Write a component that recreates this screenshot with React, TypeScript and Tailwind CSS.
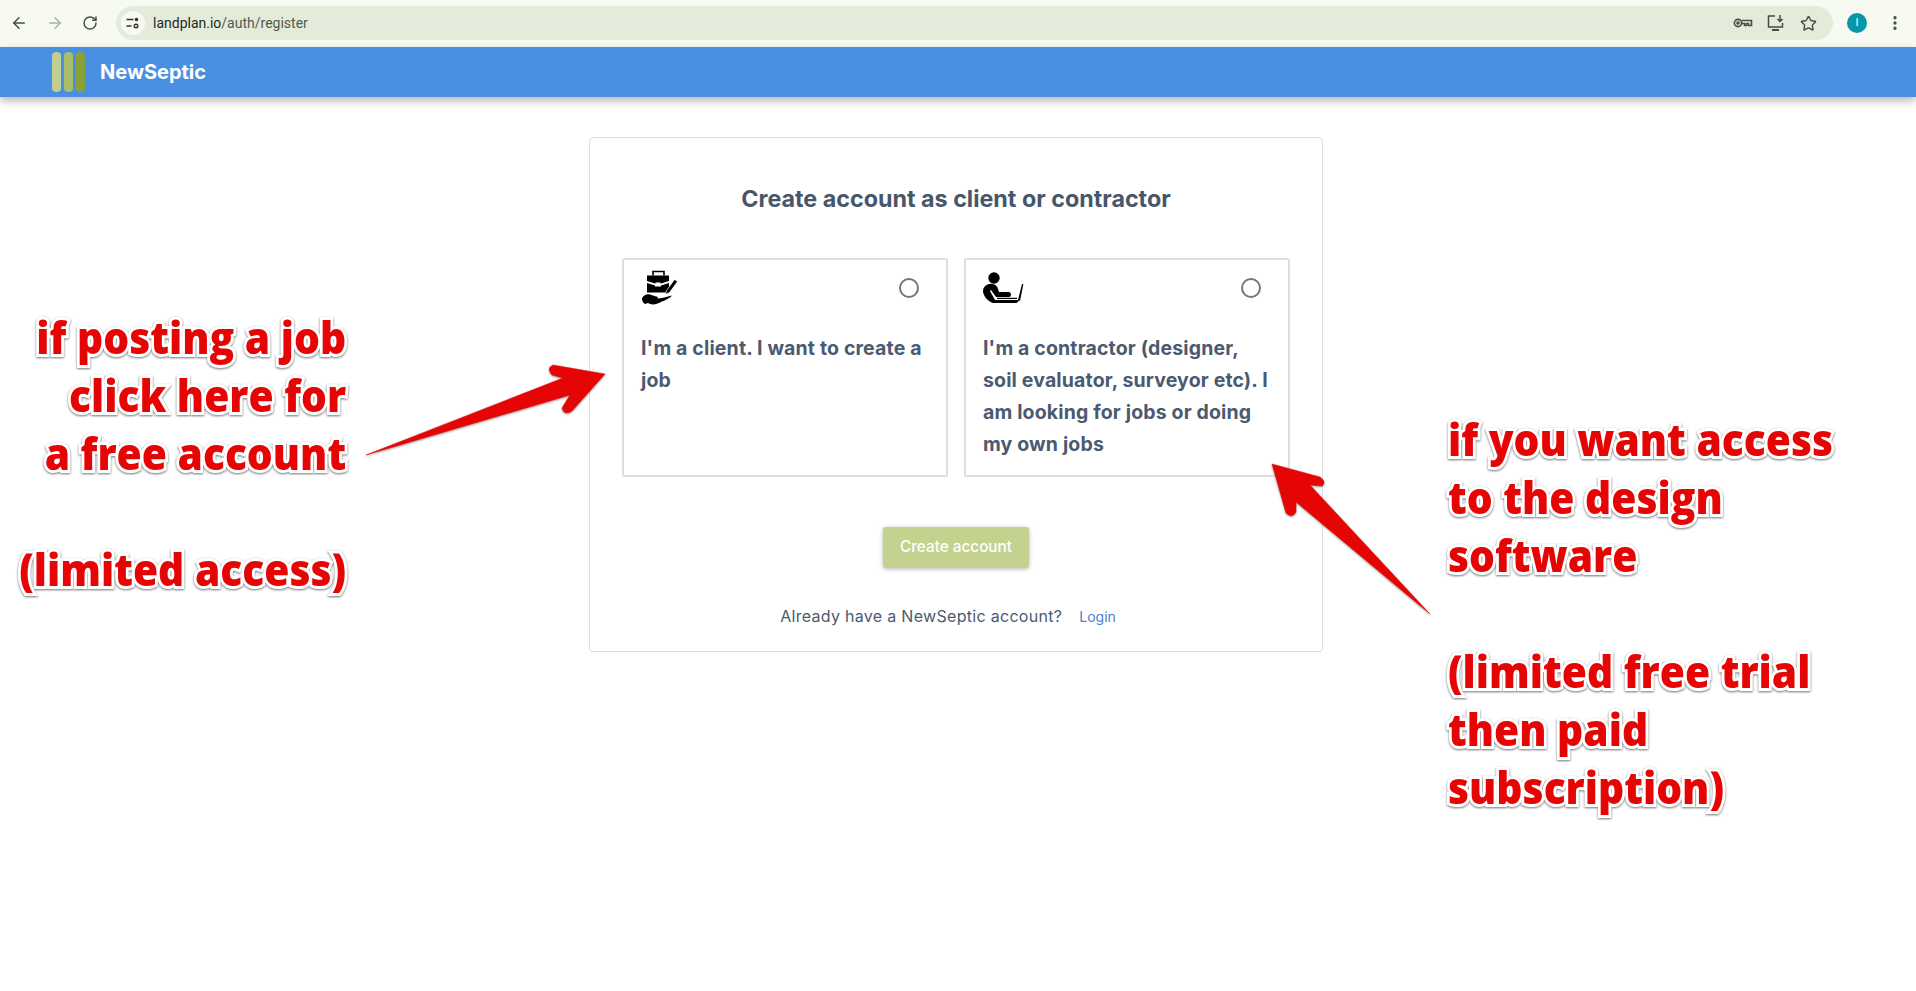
import { ArrowLeft, ArrowRight, RotateCw, Star, MoreVertical } from "lucide-react";

function ClientIcon() {
  return (
    <svg width="38" height="36" viewBox="0 0 38 36" className="block">
      <path d="M12 5.500V1.500h11v4" fill="none" stroke="#000" strokeWidth="1.600" />
      <path d="M6 5.500h22v5.500l-8 2.500h-6l-8-2.500z" fill="#000" />
      <path d="M6 13l8 2.500v1h6v-1l8-2.500v9.500H6z" fill="#000" />
      <rect x="14.500" y="12.500" width="5" height="3" fill="#fff" />
      <path d="M33.500 9.500l3 2-8 11-4 2 1-4z" fill="#000" stroke="#fff" strokeWidth="0.700" />
      <path d="M1 28.500c1-3 5-5 8-4l6 2c2 0 3 2 0 2.500h-2l8-1 10-2.500c-1 2-7 5-11 6.500-5 3-10 3-13 1l-3 1c-2-1-3-3-3-5.500z" fill="#000" />
    </svg>
  );
}

function ContractorIcon() {
  return (
    <svg width="42" height="36" viewBox="0 0 42 36" className="block">
      <circle cx="11" cy="8" r="5.700" fill="#000" />
      <path d="M2 16q4-3 8-2 4 1 5 5l1 3h10q2 0 2 2.500t-2 2.500H13l-5-7-1 1 5 9v3h-2C5 31 1 27 0 22q0-4 2-6z" fill="#000" />
      <path d="M12 30h24q-1 3-3 3H12z" fill="#000" />
      <path d="M14 27.800h20v1.200H14z" fill="#000" />
      <path d="M35 30l4-16h1.400L37 31z" fill="#000" />
    </svg>
  );
}

function TopBarIcons() {
  return (
    <div className="flex items-center gap-[14px] text-[#474d45]">
      <svg width="20" height="14" viewBox="0 0 20 14" fill="none" stroke="currentColor" strokeWidth="1.600">
        <circle cx="5" cy="7" r="3.600" />
        <circle cx="5" cy="7" r="1" fill="currentColor" />
        <path d="M8.600 4.500h9.900v5h-3v-2h-2v2h-2v-2H8.600" />
      </svg>
      <svg width="18" height="18" viewBox="0 0 18 18" fill="none" stroke="currentColor" strokeWidth="1.500">
        <path d="M8 2H1.500v11h14V9" />
        <path d="M5 16h7" strokeWidth="2" />
        <path d="M13 1v6M10.500 5l2.500 2.500L15.500 5" />
      </svg>
      <Star size={17} strokeWidth={2} className="ml-[1px]" />
    </div>
  );
}

function RoleCard({ icon, text }: { icon: React.ReactNode; text: string }) {
  return (
    <div className="h-[219px] w-[326px] rounded-[2px] border-2 border-[#dedede] px-[16px]">
      <div className="flex h-[66px] items-start justify-between pl-[1px] pr-[11px] pt-[10px]">
        {icon}
        <span className="mt-[8px] h-[20px] w-[20px] rounded-full border-2 border-[#767676]" />
      </div>
      <p className="mt-[6px] pl-[1px] text-[19.500px] font-bold leading-[32px] tracking-[0.15px] text-[#4a5a70]">{text}</p>
    </div>
  );
}

const annotation =
  "absolute whitespace-pre font-['Open_Sans',sans-serif] text-[44px] font-extrabold leading-[58px] text-[#e60505] scale-x-[0.926] [paint-order:stroke_fill] [-webkit-text-stroke:6px_#fff] [filter:drop-shadow(0_1px_1px_rgba(0,0,0,0.55))]";

export default function App() {
  return (
    <div className="relative h-[991px] w-[1916px] overflow-hidden bg-white font-['Inter',sans-serif]">
      {/* browser toolbar */}
      <div className="flex h-[47px] items-center bg-[#f7faf1] pb-[1px] pl-[10px] pr-[12px]">
        <div className="flex items-center gap-[18px] text-[#474d45]">
          <ArrowLeft size={18} strokeWidth={2} />
          <ArrowRight size={18} strokeWidth={2} className="text-[#a9aea6]" />
          <RotateCw size={16} strokeWidth={2.2} />
        </div>
        <div className="ml-[18px] flex h-[34px] flex-1 items-center justify-between rounded-full bg-[#e4ebdb] pl-[5px] pr-[16px]">
          <div className="flex items-center">
            <div className="flex h-[24px] w-[24px] items-center justify-center rounded-full bg-[#f7faf1]">
              <svg width="14" height="12" viewBox="0 0 14 12" fill="none" stroke="#333" strokeWidth="1.400">
                <path d="M0.500 2.500h7M0.500 9h5" />
                <circle cx="10.500" cy="2.500" r="1.800" fill="#333" stroke="none" />
                <circle cx="10" cy="9" r="1.800" />
              </svg>
            </div>
            <span className="ml-[8px] font-['Roboto',sans-serif] text-[14px] text-[#1f2a1c]">
              landplan.io<span className="text-[#505a4d]">/auth/register</span>
            </span>
          </div>
          <TopBarIcons />
        </div>
        <div className="ml-[14px] flex h-[20px] w-[20px] items-center justify-center rounded-full bg-[#0897a9] font-['Roboto',sans-serif] text-[11px] text-white">
          I
        </div>
        <MoreVertical size={18} strokeWidth={2.4} className="ml-[19px] text-[#474d45]" />
      </div>

      {/* app header */}
      <header className="relative z-10 flex h-[50px] items-center bg-[#4a90e2] pl-[52px] shadow-[0_4px_8px_rgba(0,0,0,0.28)]">
        <div className="flex h-[40px] gap-[3px]">
          <span className="w-[9px] rounded-[4px] bg-[#c0ce92]" />
          <span className="w-[9px] rounded-[4px] bg-[#a9bd6a]" />
          <span className="w-[9px] rounded-[4px] bg-[#8aa237]" />
        </div>
        <span className="ml-[15px] text-[20px] font-bold text-white">NewSeptic</span>
      </header>

      {/* register card */}
      <main className="flex justify-center pr-[4px] pt-[40px]">
        <div className="flex h-[515px] w-[734px] flex-col items-center rounded-[4px] border border-[#dedede] pt-[45px]">
          <h1 className="text-[23.300px] font-bold leading-[32px] text-[#46566b]">Create account as client or contractor</h1>
          <div className="mt-[43px] flex gap-[16px]">
            <RoleCard icon={<ClientIcon />} text="I'm a client. I want to create a job" />
            <RoleCard
              icon={<ContractorIcon />}
              text="I'm a contractor (designer, soil evaluator, surveyor etc). I am looking for jobs or doing my own jobs"
            />
          </div>
          <button className="mt-[50px] h-[41px] w-[146px] rounded-[3px] bg-[#c3d28f] text-[15.300px] font-medium text-white shadow-[0_1px_4px_rgba(0,0,0,0.3)]">
            Create account
          </button>
          <div className="mr-[16px] mt-[36px] flex items-center text-[16px] tracking-[0.3px] text-[#4a5a70]">
            <span>Already have a NewSeptic account?</span>
            <span className="ml-[17px] text-[14px] tracking-normal text-[#4a80d0]">Login</span>
          </div>
        </div>
      </main>

      {/* annotations drawn over the page */}
      <div className={`${annotation} right-[1570px] top-[308px] origin-right text-right`}>
        {"if posting a job\nclick here for\na free account\n\n(limited access)"}
      </div>
      <div className={`${annotation} left-[1448px] top-[410px] origin-left`}>
        {"if you want access\nto the design\nsoftware\n\n(limited free trial\nthen paid\nsubscription)"}
      </div>

      <svg className="absolute left-0 top-0 z-20" width="1916" height="991" viewBox="0 0 1916 991">
        <g fill="#e60505" stroke="#e60505" strokeLinejoin="round" className="[filter:drop-shadow(0_1px_1px_rgba(0,0,0,0.4))]">
          <path strokeWidth="0.5" d="M366 455L563 378L552 375Q546 368 553 365L605 374L572 411Q564 416 562 408L570 395z" />
          <path strokeWidth="0.5" d="M1272 464L1320 477Q1327 482 1322 486L1310 485L1430 614L1296 502L1296 512Q1292 519 1286 513z" />
        </g>
      </svg>
    </div>
  );
}
